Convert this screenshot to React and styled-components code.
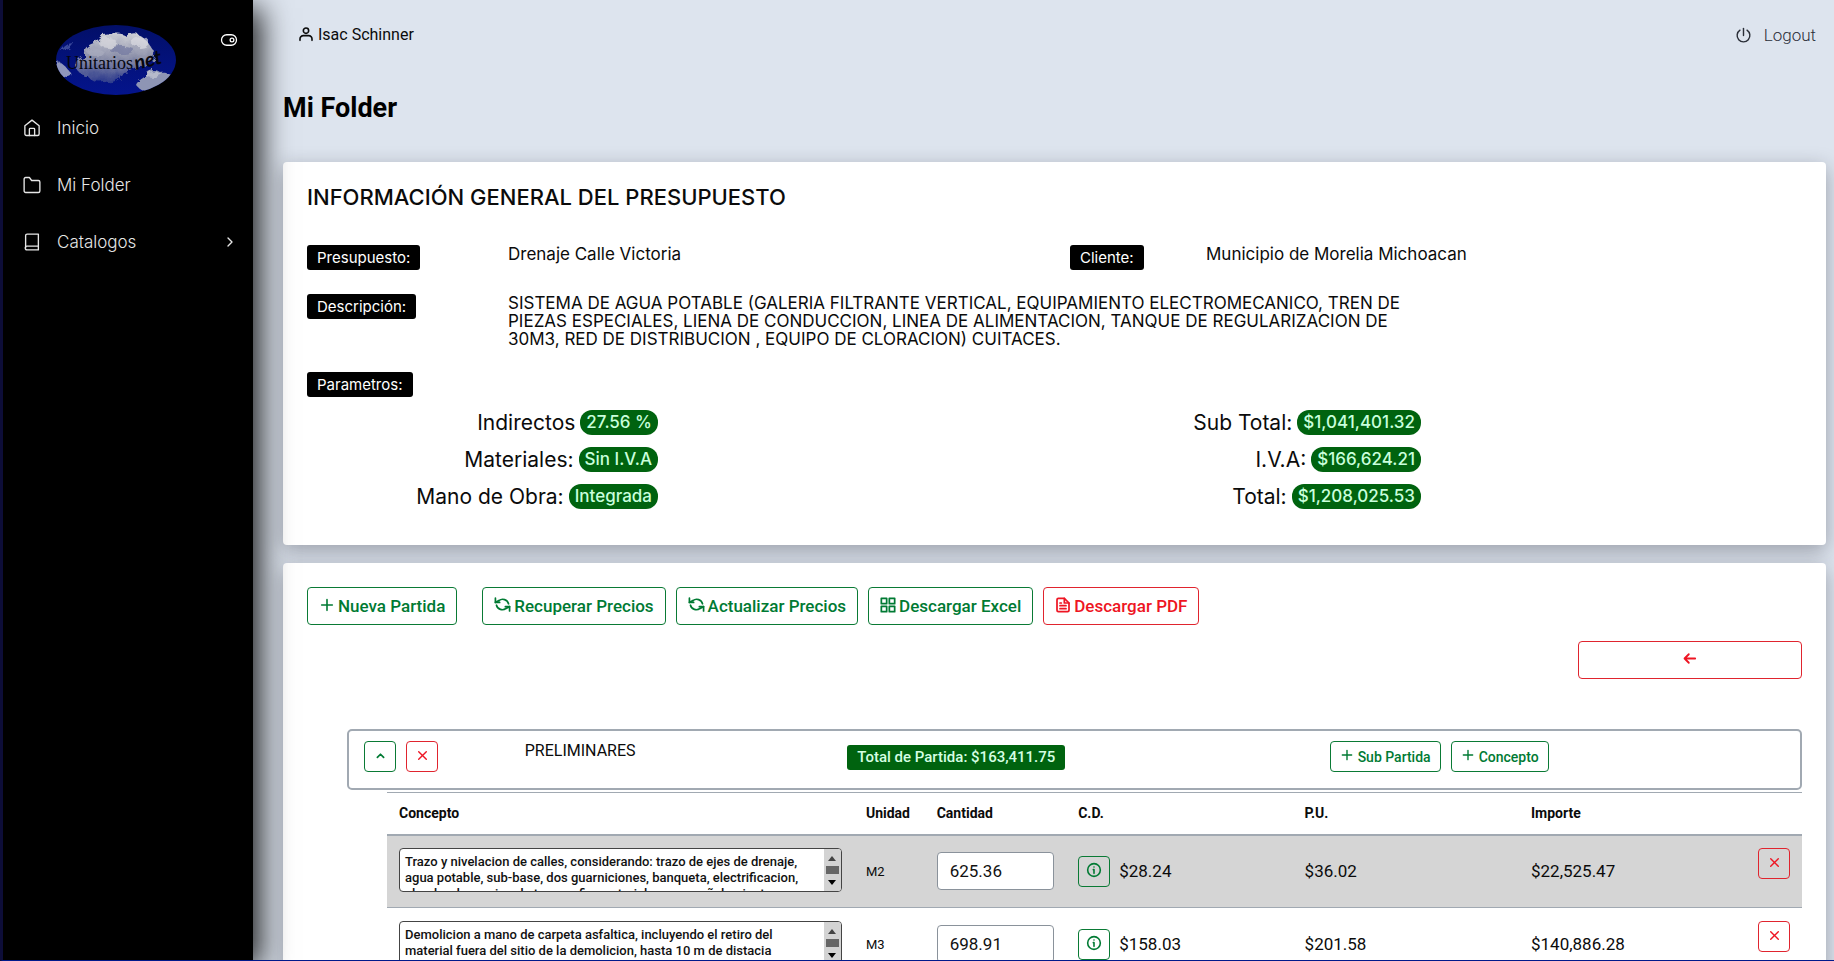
import React, { useState } from "react";
import styled, { createGlobalStyle, css } from "styled-components";

const GlobalStyle = createGlobalStyle`
    * { box-sizing: border-box; }
    body {
        margin: 0;
        background: #dde4ee;
        color: #0b0b0b;
        font-family: Roboto, "Liberation Sans", sans-serif;
        font-size: 16px;
        line-height: 24px;
    }
    button, input, textarea { font-family: inherit; }
    h1, h2, h3, p { margin: 0; }
`;

const display = `font-family: Inter, "Open Sans", sans-serif;`;

/* ---------- layout ---------- */

const Shell = styled.div`
    display: flex;
    height: 100vh;
    overflow: hidden;
    border-left: 3px solid #0d0d38;
    border-bottom: 1px solid #001a8c;
`;

const Sidebar = styled.aside`
    flex: 0 0 250px;
    background: #000;
    color: #fff;
    box-shadow: 8px 8px 28px rgba(0, 0, 0, 0.85);
    z-index: 2;
`;

const Brand = styled.div`
    display: flex;
    align-items: flex-start;
    justify-content: space-between;
    padding: 25px 15px 0 53px;
    height: 99px;
`;

const ToggleButton = styled.button`
    display: flex;
    margin-top: 6px;
    padding: 0;
    border: 0;
    background: none;
    color: #fff;
`;

const Menu = styled.nav`
    display: flex;
    flex-direction: column;
`;

const MenuLink = styled.a`
    ${display}
    display: flex;
    align-items: center;
    height: 57px;
    padding: 0 15px 0 20px;
    color: #e6e6e6;
    font-size: 17px;
    font-weight: 300;
    text-decoration: none;

    span {
        flex: 1;
        margin-left: 16px;
    }
`;

const Main = styled.main`
    flex: 1;
    min-width: 0;
    overflow: hidden;
    padding: 0 8px 0 30px;
`;

const TopBar = styled.header`
    display: flex;
    align-items: center;
    justify-content: space-between;
    height: 70px;
    padding: 0 10px 0 15px;
`;

const User = styled.div`
    display: flex;
    align-items: center;
    gap: 4px;
`;

const LogoutLink = styled.a`
    display: flex;
    align-items: center;
    gap: 12px;
    color: #2b2f38;
    font-size: 17px;
    font-weight: 300;
    text-decoration: none;
`;

const PageTitle = styled.h1`
    padding: 22px 0 38px;
    color: #000;
    font-size: 27px;
    font-weight: 700;
    line-height: 32px;
`;

const Card = styled.section`
    margin-bottom: 18px;
    padding: 24px;
    border-radius: 4px;
    background: #fff;
    box-shadow: 0 6px 20px rgba(30, 30, 40, 0.35);
`;

/* ---------- budget info ---------- */

const CardTitle = styled.h2`
    ${display}
    margin-bottom: 37px;
    font-size: 22px;
    font-weight: 500;
    line-height: 22px;
`;

const InfoGrid = styled.div`
    ${display}
    display: grid;
    grid-template-columns: 201fr 562fr 136fr 596fr;
    row-gap: 24px;
    font-size: 17px;
    line-height: 18px;
`;

const Tag = styled.span`
    display: inline-block;
    height: 25px;
    padding: 0 10px;
    border-radius: 3px;
    background: ${(p) => (p.$green ? "#00630f" : "#000")};
    color: ${(p) => (p.$green ? "#d6ffe4" : "#fff")};
    font-size: 15px;
    font-weight: ${(p) => (p.$green ? 500 : 400)};
    line-height: 25px;
`;

const Description = styled.p`
    grid-column: 2 / 5;
    max-width: 900px;
    height: 54px;
`;

const Totals = styled.div`
    ${display}
    display: grid;
    grid-template-columns: 351fr 763fr 381fr;
    row-gap: 12px;
    padding: 13px 0 12px;
`;

const Total = styled.div`
    display: flex;
    align-items: center;
    justify-content: flex-end;
    gap: 5px;
    font-size: 21px;
    line-height: 25px;
`;

const Pill = styled.span`
    padding: 0 6px;
    border-radius: 12px;
    background: #00630f;
    color: #c9ffdc;
    font-size: 17px;
    font-weight: 500;
`;

/* ---------- buttons ---------- */

const green = css`
    border-color: #0a7a35;
    color: #007a33;
`;

const red = css`
    border-color: #e0242e;
    color: #ee1523;
`;

const Button = styled.button`
    display: inline-flex;
    align-items: center;
    justify-content: center;
    gap: 3px;
    height: 38px;
    padding: 0 11px;
    border: 1px solid;
    border-radius: 4px;
    background: transparent;
    font-size: 17px;
    font-weight: 500;
    ${(p) => (p.$danger ? red : green)}

    svg {
        margin-bottom: 3px;
    }
`;

const SmallButton = styled(Button)`
    height: 31px;
    padding: 0 9px;
    gap: 4px;
    font-size: 14px;
`;

const SquareButton = styled(SmallButton)`
    flex: none;
    width: 32px;
    padding: 0;
`;

const Toolbar = styled.div`
    display: flex;
    gap: 10px;

    button:first-child {
        margin-right: 15px;
    }
`;

const BackRow = styled.div`
    display: flex;
    justify-content: flex-end;
    padding: 16px 0 50px;

    button {
        width: 15%;
    }
`;

/* ---------- partida ---------- */

const Partida = styled.div`
    display: grid;
    grid-template-columns: 161fr 323fr 483fr 471fr;
    align-items: start;
    height: 61px;
    margin-left: 40px;
    padding: 10px 0 0 15px;
    border: 2px solid #a1a9b2;
    border-radius: 5px;
`;

const PartidaActions = styled.div`
    display: flex;
    gap: 10px;
`;

const PartidaName = styled.h3`
    font-size: 16px;
    font-weight: 400;
    line-height: 20px;
`;

const PartidaTotal = styled.div`
    padding-top: 4px;
`;

const Table = styled.table`
    width: calc(100% - 80px);
    margin: 2px 0 0 80px;
    border-collapse: collapse;
    table-layout: fixed;
    border-top: 1px solid #a1a9b2;

    th {
        height: 42px;
        padding: 0 12px;
        border-bottom: 2px solid #a1a9b2;
        font-size: 14px;
        font-weight: 700;
        text-align: left;
    }

    td {
        height: 73px;
        padding: 0 12px;
        border-bottom: 1px solid #a1a9b2;
        font-size: 17px;
    }

    tbody tr:nth-child(odd) {
        background: #d5d5d5;
    }
`;

const Unit = styled.span`
    font-size: 13px;
`;

const ConceptBox = styled.div`
    display: flex;
    height: 44px;
    margin-bottom: 3px;
    border: 1px solid #444;
    border-radius: 4px;
    background: #fff;
    overflow: hidden;
`;

const ConceptText = styled.textarea`
    flex: 1;
    min-width: 0;
    padding: 5px;
    border: 0;
    outline: 0;
    background: transparent;
    color: #111;
    font-size: 13px;
    font-weight: 500;
    line-height: 16px;
    resize: none;
    scrollbar-width: none;
`;

const ScrollTrack = styled.div`
    display: flex;
    flex-direction: column;
    align-items: center;
    justify-content: space-between;
    width: 17px;
    padding: 7px 0 6px;
    background: #d3d3d3;
`;

const ScrollThumb = styled.i`
    width: 13px;
    height: 8px;
    background: #666;
`;

const Quantity = styled.input`
    display: block;
    width: 100%;
    height: 38px;
    padding: 0 12px;
    border: 1px solid #8a929b;
    border-radius: 4px;
    background: #fff;
    color: #111;
    font-size: 17px;
`;

const CostCell = styled.div`
    display: flex;
    align-items: center;
    gap: 9px;
`;

const RowAction = styled.div`
    display: flex;
    justify-content: flex-end;
    margin-bottom: 15px;
`;

/* ---------- icons ---------- */

const Icon = ({ size = 16, stroke = 2, children }) => (
    <svg
        width={size}
        height={size}
        viewBox='0 0 24 24'
        fill='none'
        stroke='currentColor'
        strokeWidth={stroke}
        strokeLinecap='round'
        strokeLinejoin='round'
        aria-hidden='true'
    >
        {children}
    </svg>
);

const HomeIcon = () => (
    <Icon size={18} stroke={1.8}>
        <path d='M2.5 9 12 1.5 21.5 9v11a2 2 0 0 1-2 2h-15a2 2 0 0 1-2-2z' />
        <path d='M8.5 22v-8.5a1 1 0 0 1 1-1h5a1 1 0 0 1 1 1V22' />
    </Icon>
);

const FolderIcon = () => (
    <Icon size={18} stroke={1.8}>
        <path d='M1.5 19V4a2 2 0 0 1 2-2h5l3 4h9a2 2 0 0 1 2 2v12a2 2 0 0 1-2 2h-17a2 2 0 0 1-2-2z' />
    </Icon>
);

const BookIcon = () => (
    <Icon size={18} stroke={1.8}>
        <path d='M3.5 20V3.500a2 2 0 0 1 2-2h15v21h-15a2.500 2.500 0 0 1 0-5h15' />
    </Icon>
);

const ToggleIcon = () => (
    <Icon size={18} stroke={1.7}>
        <rect x='2' y='5' width='20' height='14' rx='7' />
        <circle cx='16' cy='12' r='2.5' />
    </Icon>
);

const ChevronRight = () => (
    <Icon size={16}>
        <path d='m9 6 6 6-6 6' />
    </Icon>
);

const UserIcon = () => (
    <Icon size={16} stroke={2.4}>
        <circle cx='12' cy='5.5' r='4' />
        <path d='M3 20v-2a5 5 0 0 1 5-5h8a5 5 0 0 1 5 5v2' />
    </Icon>
);

const PowerIcon = () => (
    <Icon size={17}>
        <path d='M12 2v10' />
        <path d='M7 4.5a9 9 0 1 0 10 0' />
    </Icon>
);

const PlusIcon = ({ size }) => (
    <Icon size={size} stroke={2.4}>
        <path d='M12 4v16M4 12h16' />
    </Icon>
);

const RefreshIcon = () => (
    <Icon size={17} stroke={2.4}>
        <path d='M2 3v6h6' />
        <path d='M22 21v-6h-6' />
        <path d='M7 6.5a8.500 8.500 0 0 1 13.5 4.500' />
        <path d='M17 17.5a8.500 8.500 0 0 1-13.500-4.500' />
        <path d='m2 9 5-2.500M22 15l-5 2.500' />
    </Icon>
);

const GridIcon = () => (
    <Icon size={16} stroke={2.6}>
        <rect x='2' y='2' width='8' height='8' />
        <rect x='14' y='2' width='8' height='8' />
        <rect x='2' y='14' width='8' height='8' />
        <rect x='14' y='14' width='8' height='8' />
    </Icon>
);

const FileIcon = () => (
    <Icon size={16} stroke={2.6}>
        <path d='M14 2H5a2 2 0 0 0-2 2v16a2 2 0 0 0 2 2h14a2 2 0 0 0 2-2V9z' />
        <path d='M14 2v7h7M7.5 9h2M7.5 13h9M7.5 17.5h9' />
    </Icon>
);

const BackIcon = () => (
    <Icon size={17} stroke={2.6}>
        <path d='M20 12H5M11 6l-6 6 6 6' />
    </Icon>
);

const ChevronUp = () => (
    <Icon size={15} stroke={2.8}>
        <path d='m7 15 5-5 5 5' />
    </Icon>
);

const CloseIcon = () => (
    <Icon size={13} stroke={2.6}>
        <path d='M5 5l14 14M19 5 5 19' />
    </Icon>
);

const InfoIcon = () => (
    <Icon size={16} stroke={2.4}>
        <circle cx='12' cy='12' r='9.5' />
        <path d='M11 11.5h1V17M12 7.5v.1' />
    </Icon>
);

const Arrow = ({ down }) => (
    <svg width='8' height='5' viewBox='0 0 8 5' aria-hidden='true'>
        <path d={down ? "M0 0h8L4 5z" : "M0 5h8L4 0z"} fill={down ? "#000" : "#444"} />
    </svg>
);

const Logo = () => (
    <svg width='120' height='70' viewBox='0 0 120 70' role='img' aria-label='Unitarios net'>
        <defs>
            <clipPath id='oval'>
                <ellipse cx='60' cy='35' rx='60' ry='35' />
            </clipPath>
            <linearGradient id='sky' x1='0' y1='0' x2='0' y2='1'>
                <stop offset='0' stopColor='#020f68' />
                <stop offset='1' stopColor='#04148c' />
            </linearGradient>
            <linearGradient id='cloud' x1='0' y1='0' x2='0' y2='1'>
                <stop offset='0' stopColor='#cfd0d6' />
                <stop offset='0.5' stopColor='#8c90aa' />
                <stop offset='1' stopColor='#2c3a8c' />
            </linearGradient>
            {/* ragged cloud edges */}
            <filter id='puff' x='-10%' y='-10%' width='120%' height='120%'>
                <feTurbulence type='fractalNoise' baseFrequency='0.12' numOctaves='3' seed='4' result='noise' />
                <feDisplacementMap in='SourceGraphic' in2='noise' scale='8' />
                <feGaussianBlur stdDeviation='0.6' />
            </filter>
        </defs>
        <g clipPath='url(#oval)'>
            <rect width='120' height='70' fill='url(#sky)' />
            <g filter='url(#puff)'>
                <path
                    d='M20 42c-2-7 4-9 9-11-1-8 6-11 10-12 3-8 10-11 17-9 6-3 11-1 14 1 5-4 14-4 17 2 6 4 8 9 11 13 4 6-3 14-10 15-8 1-12 6-20 7-4 8-13 11-21 8-8 2-14-2-17-7-6 1-9-3-10-7z'
                    fill='url(#cloud)'
                />
                <ellipse cx='52' cy='18' rx='9' ry='5' fill='#d9d9de' opacity='0.7' />
                <ellipse cx='84' cy='17' rx='9' ry='6' fill='#dcdce2' opacity='0.7' />
                <ellipse cx='66' cy='25' rx='12' ry='4' fill='#7076a0' opacity='0.7' />
                <ellipse cx='40' cy='28' rx='8' ry='4' fill='#a9acbf' opacity='0.7' />
                <path
                    d='M80 60c2-5 7-6 9-9 3-6 10-8 15-4 6-1 10 2 14 5v12l-22 6c-6-2-12-5-16-10z'
                    fill='#8e95b4'
                />
                <ellipse cx='98' cy='50' rx='8' ry='3' fill='#b6bacb' />
                <path d='M0 36c6 1 10 6 15 12 2 4-4 5-8 3l-7-3z' fill='#8f96bc' />
                <path d='M4 25c3-5 7-8 13-8-2 5-8 8-13 8z' fill='#3a4a9c' />
            </g>
        </g>
        <text x='10' y='44' fontFamily='"Liberation Serif", serif' fontSize='18' fill='#05060f'>
            Unitarios
        </text>
        <text
            x='80'
            y='45'
            fontFamily='Lato, sans-serif'
            fontSize='20'
            fontStyle='italic'
            fontWeight='700'
            fill='#05060f'
            transform='rotate(-14 80 45)'
        >
            net
        </text>
    </svg>
);

/* ---------- data ---------- */

const parametros = [
    ["Indirectos", "27.56 %", "Sub Total:", "$1,041,401.32"],
    ["Materiales:", "Sin I.V.A", "I.V.A:", "$166,624.21"],
    ["Mano de Obra:", "Integrada", "Total:", "$1,208,025.53"],
];

const conceptos = [
    {
        texto: "Trazo y nivelacion de calles, considerando: trazo de ejes de drenaje,\nagua potable, sub-base, dos guarniciones, banqueta, electrificacion,\nalumbrado, equipo de topografia, materiales para señalamiento.",
        unidad: "M2",
        cantidad: "625.36",
        cd: "$28.24",
        pu: "$36.02",
        importe: "$22,525.47",
    },
    {
        texto: "Demolicion a mano de carpeta asfaltica, incluyendo el retiro del\nmaterial fuera del sitio de la demolicion, hasta 10 m de distacia",
        unidad: "M3",
        cantidad: "698.91",
        cd: "$158.03",
        pu: "$201.58",
        importe: "$140,886.28",
    },
];

const Concepto = ({ item }) => {
    const [cantidad, setCantidad] = useState(item.cantidad);

    return (
        <tr>
            <td>
                <ConceptBox>
                    <ConceptText aria-label='Concepto' defaultValue={item.texto} />
                    <ScrollTrack>
                        <Arrow />
                        <ScrollThumb />
                        <Arrow down />
                    </ScrollTrack>
                </ConceptBox>
            </td>
            <td>
                <Unit>{item.unidad}</Unit>
            </td>
            <td>
                <Quantity
                    aria-label='Cantidad'
                    value={cantidad}
                    onChange={(e) => setCantidad(e.target.value)}
                />
            </td>
            <td>
                <CostCell>
                    <SquareButton aria-label='Detalle'>
                        <InfoIcon />
                    </SquareButton>
                    {item.cd}
                </CostCell>
            </td>
            <td>{item.pu}</td>
            <td>{item.importe}</td>
            <td>
                <RowAction>
                    <SquareButton $danger aria-label='Eliminar concepto'>
                        <CloseIcon />
                    </SquareButton>
                </RowAction>
            </td>
        </tr>
    );
};

const App = () => {
    return (
        <>
            <GlobalStyle />
            <Shell>
                <Sidebar>
                    <Brand>
                        <Logo />
                        <ToggleButton aria-label='Contraer menu'>
                            <ToggleIcon />
                        </ToggleButton>
                    </Brand>
                    <Menu>
                        <MenuLink href='#inicio'>
                            <HomeIcon />
                            <span>Inicio</span>
                        </MenuLink>
                        <MenuLink href='#folder'>
                            <FolderIcon />
                            <span>Mi Folder</span>
                        </MenuLink>
                        <MenuLink href='#catalogos'>
                            <BookIcon />
                            <span>Catalogos</span>
                            <ChevronRight />
                        </MenuLink>
                    </Menu>
                </Sidebar>

                <Main>
                    <TopBar>
                        <User>
                            <UserIcon />
                            Isac Schinner
                        </User>
                        <LogoutLink href='#logout'>
                            <PowerIcon />
                            Logout
                        </LogoutLink>
                    </TopBar>

                    <PageTitle>Mi Folder</PageTitle>

                    <Card>
                        <CardTitle>INFORMACIÓN GENERAL DEL PRESUPUESTO</CardTitle>
                        <InfoGrid>
                            <div>
                                <Tag>Presupuesto:</Tag>
                            </div>
                            <p>Drenaje Calle Victoria</p>
                            <div>
                                <Tag>Cliente:</Tag>
                            </div>
                            <p>Municipio de Morelia Michoacan</p>
                            <div>
                                <Tag>Descripción:</Tag>
                            </div>
                            <Description>
                                SISTEMA DE AGUA POTABLE (GALERIA FILTRANTE VERTICAL, EQUIPAMIENTO
                                ELECTROMECANICO, TREN DE PIEZAS ESPECIALES, LIENA DE CONDUCCION,
                                LINEA DE ALIMENTACION, TANQUE DE REGULARIZACION DE 30M3, RED DE
                                DISTRIBUCION , EQUIPO DE CLORACION) CUITACES.
                            </Description>
                            <div>
                                <Tag>Parametros:</Tag>
                            </div>
                        </InfoGrid>
                        <Totals>
                            {parametros.map(([label, value, label2, value2]) => (
                                <React.Fragment key={label}>
                                    <Total>
                                        {label} <Pill>{value}</Pill>
                                    </Total>
                                    <Total>
                                        {label2} <Pill>{value2}</Pill>
                                    </Total>
                                    <span />
                                </React.Fragment>
                            ))}
                        </Totals>
                    </Card>

                    <Card>
                        <Toolbar>
                            <Button>
                                <PlusIcon size={16} />
                                Nueva Partida
                            </Button>
                            <Button>
                                <RefreshIcon />
                                Recuperar Precios
                            </Button>
                            <Button>
                                <RefreshIcon />
                                Actualizar Precios
                            </Button>
                            <Button>
                                <GridIcon />
                                Descargar Excel
                            </Button>
                            <Button $danger>
                                <FileIcon />
                                Descargar PDF
                            </Button>
                        </Toolbar>
                        <BackRow>
                            <Button $danger aria-label='Regresar'>
                                <BackIcon />
                            </Button>
                        </BackRow>

                        <Partida>
                            <PartidaActions>
                                <SquareButton aria-label='Contraer partida'>
                                    <ChevronUp />
                                </SquareButton>
                                <SquareButton $danger aria-label='Eliminar partida'>
                                    <CloseIcon />
                                </SquareButton>
                            </PartidaActions>
                            <PartidaName>PRELIMINARES</PartidaName>
                            <PartidaTotal>
                                <Tag $green>Total de Partida: $163,411.75</Tag>
                            </PartidaTotal>
                            <PartidaActions>
                                <SmallButton>
                                    <PlusIcon size={14} />
                                    Sub Partida
                                </SmallButton>
                                <SmallButton>
                                    <PlusIcon size={14} />
                                    Concepto
                                </SmallButton>
                            </PartidaActions>
                        </Partida>

                        <Table>
                            <colgroup>
                                <col style={{ width: "33%" }} />
                                <col style={{ width: "5%" }} />
                                <col style={{ width: "10%" }} />
                                <col style={{ width: "16%" }} />
                                <col style={{ width: "16%" }} />
                                <col style={{ width: "14%" }} />
                                <col style={{ width: "6%" }} />
                            </colgroup>
                            <thead>
                                <tr>
                                    <th>Concepto</th>
                                    <th>Unidad</th>
                                    <th>Cantidad</th>
                                    <th>C.D.</th>
                                    <th>P.U.</th>
                                    <th>Importe</th>
                                    <th aria-label='Acciones' />
                                </tr>
                            </thead>
                            <tbody>
                                {conceptos.map((item) => (
                                    <Concepto key={item.unidad} item={item} />
                                ))}
                            </tbody>
                        </Table>
                    </Card>
                </Main>
            </Shell>
        </>
    );
};

export default App;
